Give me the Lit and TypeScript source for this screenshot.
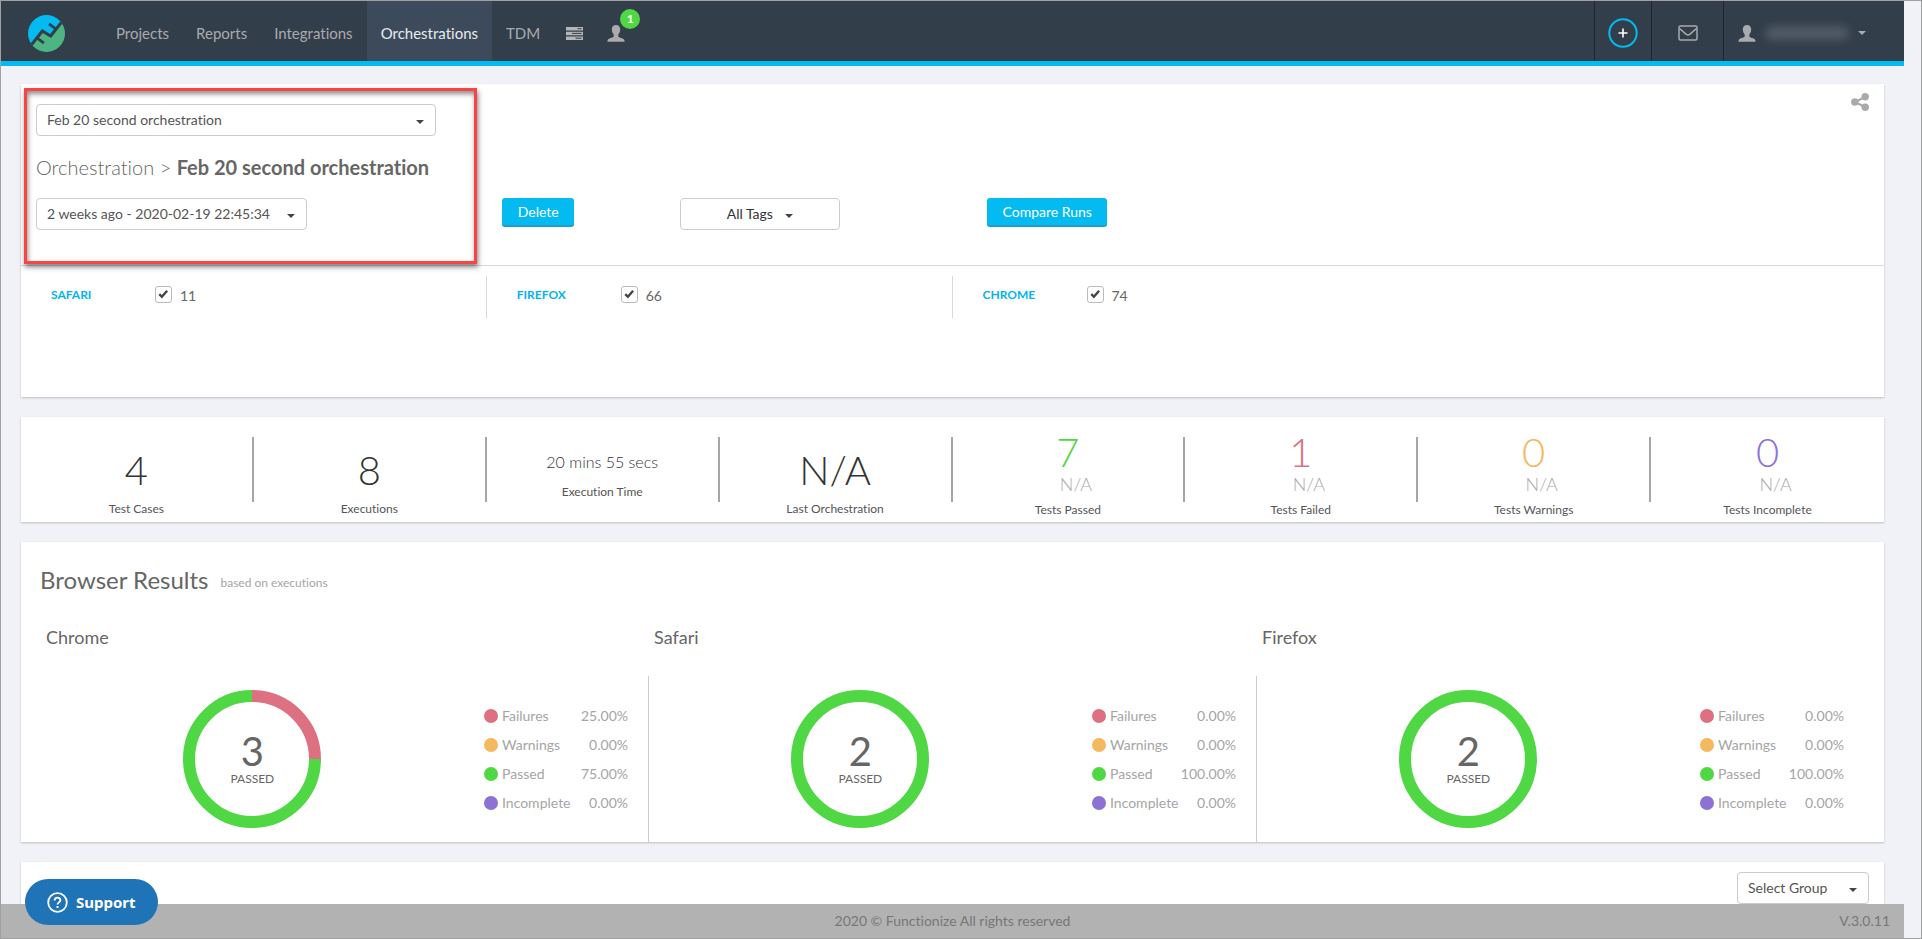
import { LitElement, html, svg, css } from "lit";
import { customElement, property, state } from "lit/decorators.js";
import { classMap } from "lit/directives/class-map.js";

interface Share {
  kind: "failures" | "warnings" | "passed" | "incomplete";
  label: string;
  value: number;
}

interface BrowserRun {
  name: string;
  passed: number;
  shares: Share[];
}

const COLORS: Record<Share["kind"], string> = {
  failures: "#dd7182",
  warnings: "#f4b85f",
  passed: "#4fd844",
  incomplete: "#8d72d6",
};

const shares = (f: number, w: number, p: number, i: number): Share[] => [
  { kind: "failures", label: "Failures", value: f },
  { kind: "warnings", label: "Warnings", value: w },
  { kind: "passed", label: "Passed", value: p },
  { kind: "incomplete", label: "Incomplete", value: i },
];

const RUNS: BrowserRun[] = [
  { name: "Chrome", passed: 3, shares: shares(25, 0, 75, 0) },
  { name: "Safari", passed: 2, shares: shares(0, 0, 100, 0) },
  { name: "Firefox", passed: 2, shares: shares(0, 0, 100, 0) },
];

const userIcon = html`<svg class="user" width="18" height="17" viewBox="0 0 18 17" aria-hidden="true">
  <path
    fill="currentColor"
    d="M9 0C6.2 0 4.800 1.900 4.800 4.600c0 2.100.9 3.900 1.900 4.900v1.700c-.3 1-1.500 1.300-3 1.900C1.700 13.900.4 14.700.4 16.800h17.200c0-2.100-1.300-2.900-3.300-3.700-1.500-.6-2.700-.9-3-1.900V9.500c1-1 1.900-2.800 1.900-4.900C13.200 1.900 11.800 0 9 0z"
  />
</svg>`;

@customElement("browser-result")
export class BrowserResult extends LitElement {
  @property({ attribute: false }) run!: BrowserRun;

  static styles = css`
    :host {
      display: flex;
      flex-direction: column;
      min-width: 0;
    }
    .name {
      margin: 0;
      padding: 0 6px;
      font-size: 18px;
      line-height: 24px;
      font-weight: 400;
      color: #666;
    }
    .body {
      flex: 1;
      display: grid;
      grid-template-columns: 72% auto;
      justify-content: space-between;
      align-items: center;
      margin-top: 27px;
      padding-right: 20px;
      border-left: 1px solid transparent;
    }
    :host(.divided) .body {
      border-left-color: #ccc;
    }
    .chart {
      display: grid;
      place-items: center;
    }
    .chart > * {
      grid-area: 1 / 1;
    }
    .center {
      display: flex;
      flex-direction: column;
      align-items: center;
      color: #666;
    }
    .count {
      font-size: 40px;
      line-height: 42px;
    }
    .caption {
      font-size: 12px;
      line-height: 14px;
      padding-bottom: 2px;
    }
    .legend {
      width: 144px;
      margin: 0;
      padding: 0;
      list-style: none;
      font-size: 14px;
      line-height: 29px;
      color: #a5a5a5;
    }
    .item {
      display: flex;
      align-items: center;
      gap: 4px;
    }
    .dot {
      width: 14px;
      height: 14px;
      border-radius: 50%;
    }
    .failures {
      background: #dd7182;
    }
    .warnings {
      background: #f4b85f;
    }
    .passed {
      background: #4fd844;
    }
    .incomplete {
      background: #8d72d6;
    }
    .value {
      margin-left: auto;
    }
  `;

  private arcs() {
    let start = 0;
    return this.run.shares
      .filter((s) => s.value > 0)
      .map((s) => {
        const arc = svg`<circle cx="70" cy="70" r="63" fill="none" stroke=${COLORS[s.kind]} stroke-width="12"
          pathLength="100" stroke-dasharray="${s.value} ${100 - s.value}" stroke-dashoffset=${-start}
          transform="rotate(-90 70 70)"></circle>`;
        start += s.value;
        return arc;
      });
  }

  render() {
    return html`
      <h3 class="name">${this.run.name}</h3>
      <div class="body">
        <div class="chart">
          <svg width="140" height="140" viewBox="0 0 140 140" aria-hidden="true">${this.arcs()}</svg>
          <div class="center">
            <span class="count">${this.run.passed}</span>
            <span class="caption">PASSED</span>
          </div>
        </div>
        <ul class="legend">
          ${this.run.shares.map(
            (s) => html`<li class="item">
              <span class="dot ${s.kind}"></span>
              <span>${s.label}</span>
              <span class="value">${s.value.toFixed(2)}%</span>
            </li>`
          )}
        </ul>
      </div>
    `;
  }
}

@customElement("app-root")
export class AppRoot extends LitElement {
  @state() private active = "Orchestrations";

  private links = ["Projects", "Reports", "Integrations", "Orchestrations", "TDM"];

  private browsers = [
    { name: "SAFARI", count: 11 },
    { name: "FIREFOX", count: 66 },
    { name: "CHROME", count: 74 },
  ];

  private totals = [
    { value: "4", label: "Test Cases" },
    { value: "8", label: "Executions" },
    { value: "20 mins 55 secs", label: "Execution Time", small: true },
    { value: "N/A", label: "Last Orchestration" },
  ];

  private outcomes = [
    { value: 7, label: "Tests Passed", tone: "green" },
    { value: 1, label: "Tests Failed", tone: "red" },
    { value: 0, label: "Tests Warnings", tone: "orange" },
    { value: 0, label: "Tests Incomplete", tone: "purple" },
  ];

  static styles = css`
    :host {
      display: block;
      font-family: Lato, "Liberation Sans", sans-serif;
      font-size: 14px;
      font-variant-ligatures: none;
      line-height: 20px;
      color: #666;
    }
    * {
      box-sizing: border-box;
    }
    button,
    select {
      font: inherit;
      font-variant-ligatures: none;
      color: inherit;
      cursor: pointer;
    }
    svg {
      display: block;
    }
    .shell {
      position: relative;
      display: flex;
      flex-direction: column;
      height: 100vh;
      padding-right: 17px;
      background: #f1f2f7;
      border: 1px solid #a0a0a0;
    }

    /* top bar */
    .topbar {
      display: flex;
      flex: none;
      height: 65px;
      background: #323e4a;
      border-bottom: 5px solid #03bbf1;
      color: #a9abad;
    }
    .brand {
      display: flex;
      align-items: center;
      padding: 4px 38px 0 27px;
    }
    .nav {
      display: flex;
      gap: 1px;
      font-size: 15px;
    }
    .link {
      display: flex;
      align-items: center;
      padding: 4px 13px 0;
      color: inherit;
      text-decoration: none;
    }
    .link.active {
      padding: 4px 14px 0;
      background: #3d4a5b;
      color: #e8ebee;
    }
    .link.icon {
      position: relative;
      padding: 4px 11px 0 12px;
    }
    .badge {
      position: absolute;
      top: 8px;
      left: 25px;
      width: 20px;
      height: 20px;
      border-radius: 50%;
      background: #4fd844;
      color: #fff;
      font-size: 12px;
      font-weight: 700;
      line-height: 20px;
      text-align: center;
    }
    .tools {
      display: flex;
      margin-left: auto;
    }
    .tool {
      display: flex;
      align-items: center;
      justify-content: center;
      padding: 4px 0 0;
      background: none;
      border: 0;
      border-left: 1px solid #1d2630;
    }
    .add {
      width: 57px;
    }
    .mail {
      width: 72px;
    }
    .account {
      width: 181px;
      justify-content: flex-start;
      padding-left: 14px;
      gap: 9px;
    }
    .who {
      width: 84px;
      height: 14px;
      border-radius: 7px;
      background: #515a65;
      filter: blur(4px);
    }
    .caret {
      border: 4px solid transparent;
      border-top-color: currentColor;
      border-bottom: 0;
    }

    /* cards */
    .page {
      flex: 1;
      min-height: 0;
      overflow: hidden;
      display: flex;
      flex-direction: column;
      gap: 20px;
      padding: 18px 20px 0;
    }
    .card {
      position: relative;
      flex: none;
      background: #fff;
      box-shadow: 0 1px 2px rgba(0, 0, 0, 0.22);
    }
    .head {
      display: grid;
      grid-template-columns: 1fr 1fr 2fr;
      align-items: end;
      padding: 20px 0 35px;
      border-bottom: 1px solid #d9d9d9;
    }
    .choose {
      display: flex;
      flex-direction: column;
      align-items: flex-start;
      gap: 20px;
      padding-left: 15px;
    }
    .title {
      margin: 0;
      font-size: 20px;
      line-height: 22px;
      font-weight: 300;
    }
    .title b {
      font-weight: 700;
    }
    .actions {
      display: flex;
      align-items: flex-start;
      height: 32px;
      padding-left: 15px;
      gap: 106px;
    }
    .compare {
      padding-left: 34px;
    }
    .pick {
      position: relative;
      display: block;
      width: 160px;
    }
    .pick::after {
      content: "";
      position: absolute;
      top: 16px;
      right: 12px;
      border: 4px solid transparent;
      border-top-color: #444;
      border-bottom: 0;
      pointer-events: none;
    }
    .pick select {
      display: block;
      appearance: none;
      width: 100%;
      height: 32px;
      padding: 0 24px 0 10px;
      border: 1px solid #ccc;
      border-radius: 4px;
      background: #fff;
      color: #555;
    }
    .pick.names {
      width: 400px;
    }
    .pick.runs {
      width: 271px;
    }
    .pick.tags::after {
      right: 47px;
    }
    .pick.tags select {
      padding-left: 46px;
      color: #333;
    }
    .pick.groups {
      width: 132px;
    }
    .primary {
      height: 29px;
      padding: 0 15px 0 16px;
      border: 0;
      border-bottom: 2px solid #1c9fc8;
      border-radius: 3px;
      background: #03bbf1;
      color: #fff;
    }
    .share {
      position: absolute;
      top: 9px;
      right: 15px;
      padding: 0;
      border: 0;
      background: none;
      color: #aaa;
    }
    .mark {
      position: absolute;
      top: 4px;
      left: 3px;
      width: 453px;
      height: 176px;
      border: 3px solid #fa4343;
      box-shadow: 1px 3px 5px rgba(0, 0, 0, 0.5), inset 1px 3px 5px rgba(0, 0, 0, 0.45);
      pointer-events: none;
    }
    .filters {
      display: grid;
      grid-template-columns: repeat(4, 1fr);
      padding: 10px 0 79px;
    }
    .filter {
      display: flex;
      align-items: flex-start;
      height: 42px;
      padding: 10px 0 0 30px;
      border-right: 1px solid #d9d9d9;
      line-height: 20px;
    }
    .filter:nth-of-type(3) {
      border-right: 0;
    }
    .filter-name {
      width: 104px;
      color: #03b4ee;
      font-size: 12px;
      font-weight: 700;
      line-height: 18px;
    }
    .check {
      appearance: none;
      width: 17px;
      height: 17px;
      margin: 0 8px 0 0;
      border: 1px solid #bbb;
      border-radius: 3px;
      background: #fff;
    }
    .check:checked {
      background: #fff
        url("data:image/svg+xml,%3Csvg xmlns='http://www.w3.org/2000/svg' viewBox='0 0 15 15'%3E%3Cpath d='M3.300 7.200l2.600 2.600 5.200-6' fill='none' stroke='%23444' stroke-width='2.400'/%3E%3C/svg%3E")
        center / 15px 15px;
    }

    /* totals */
    .stats {
      display: grid;
      grid-template-columns: repeat(8, 1fr);
      height: 105px;
      padding: 20px 0;
    }
    .stat {
      display: flex;
      flex-direction: column;
      align-items: center;
      height: 65px;
      border-right: 2px solid #a6a6a6;
      color: #333;
    }
    .stat:last-child {
      border-right: 0;
    }
    .big {
      padding-top: 9px;
      font-size: 40px;
      line-height: 48px;
      font-weight: 300;
    }
    .small .big {
      padding-top: 16px;
      font-size: 16px;
      line-height: 18px;
    }
    .label {
      padding-top: 7px;
      font-size: 12px;
      line-height: 16px;
      color: #555;
    }
    .small .label {
      padding-top: 13px;
    }
    .outcome .big {
      padding: 0;
      line-height: 30px;
    }
    .outcome .label {
      padding-top: 7px;
    }
    .trend {
      padding: 6px 0 0 16px;
      font-size: 18px;
      line-height: 22px;
      font-weight: 300;
      color: #aaa;
    }
    .green {
      color: #4fd844;
    }
    .red {
      color: #dd7182;
    }
    .orange {
      color: #f4b85f;
    }
    .purple {
      color: #8d72d6;
    }

    /* browser results */
    .results {
      height: 300px;
      padding: 23px 20px 0 19px;
      display: flex;
      flex-direction: column;
      gap: 26px;
    }
    .results-title {
      display: flex;
      align-items: center;
      gap: 12px;
      margin: 0;
      font-size: 24px;
      line-height: 30px;
      font-weight: 400;
    }
    .results-title small {
      padding-top: 5px;
      font-size: 12px;
      line-height: 16px;
      color: #a5a5a5;
    }
    .browsers {
      flex: 1;
      display: grid;
      grid-template-columns: repeat(3, 1fr);
      padding-top: 4px;
    }
    .groups-bar {
      display: flex;
      justify-content: flex-end;
      padding: 10px 15px;
    }

    /* footer */
    .footer {
      flex: none;
      display: grid;
      grid-template-columns: 1fr auto 1fr;
      align-items: center;
      height: 34px;
      padding: 0 14px;
      background: #b2b2b2;
      color: #777;
    }
    .version {
      grid-column: 3;
      justify-self: end;
    }
    .copy {
      grid-column: 2;
    }
    .support {
      position: absolute;
      left: 24px;
      bottom: 13px;
      display: flex;
      align-items: center;
      gap: 8px;
      height: 46px;
      padding: 0 22px;
      border: 0;
      border-radius: 23px;
      background: #1f73b7;
      color: #fff;
      font-family: "Noto Sans", "Open Sans", sans-serif;
      font-size: 15px;
      font-weight: 700;
    }
  `;

  private select(kind: string, label: string, text: string) {
    return html`<label class="pick ${kind}">
      <select aria-label=${label}>
        <option>${text}</option>
      </select>
    </label>`;
  }

  private renderTopbar() {
    return html`<header class="topbar">
      <a class="brand" href="#" aria-label="Home">
        <svg width="37" height="37" viewBox="0 0 36 36">
          <clipPath id="disc"><circle cx="18" cy="18" r="18" /></clipPath>
          <g clip-path="url(#disc)">
            <path fill="#03bbf1" d="M0 0H36V4L23 21.500 13 14.500 2 30H0z" />
            <path fill="#4cb582" d="M36 36H0V32L13 14.500 23 21.500 34 6H36z" />
            <path fill="none" stroke="#323e4a" stroke-width="3" d="M1 32 14 15.500 22 20.500 35 4" />
            <path fill="none" stroke="#323e4a" stroke-width="2.600" d="M9 22.500l6.500 4.800M27 13.500l-6.500-4.800" />
          </g>
        </svg>
      </a>
      <nav class="nav">
        ${this.links.map(
          (name) => html`<a
            class=${classMap({ link: true, active: name === this.active })}
            href="#"
            @click=${() => (this.active = name)}
            >${name}</a
          >`
        )}
        <a class="link icon" href="#" aria-label="Queue">
          <svg width="17" height="13" viewBox="0 0 17 13">
            <path fill="#b4b6b8" d="M0 0h17v3.500H0zM0 4.700h17v3.500H0zM0 9.400h17V13H0z" />
            <path stroke="#323e4a" d="M11.500 1.700h4M6 6.400h9.500M9.500 11.200h6" />
          </svg>
        </a>
        <a class="link icon" href="#" aria-label="Users">${userIcon}<span class="badge">1</span></a>
      </nav>
      <div class="tools">
        <button class="tool add" aria-label="Add">
          <svg width="30" height="30" viewBox="0 0 30 30">
            <circle cx="15" cy="15" r="13.700" fill="none" stroke="#03bbf1" stroke-width="2" />
            <path d="M15 10.500v9M10.500 15h9" stroke="#fff" stroke-width="1.600" />
          </svg>
        </button>
        <button class="tool mail" aria-label="Messages">
          <svg width="20" height="16" viewBox="0 0 20 16" fill="none" stroke="#a9abad" stroke-width="1.500">
            <rect x="1" y="1" width="18" height="14" rx="1.500" />
            <path d="M1.500 3.500 8.300 9.300q1.700 1.300 3.400 0L18.500 3.500" />
          </svg>
        </button>
        <button class="tool account" aria-label="Account">
          ${userIcon}<span class="who"></span><span class="caret"></span>
        </button>
      </div>
    </header>`;
  }

  private renderOrchestration() {
    return html`<section class="card">
      <div class="head">
        <div class="choose">
          ${this.select("names", "Orchestration", "Feb 20 second orchestration")}
          <h1 class="title">Orchestration &gt; <b>Feb 20 second orchestration</b></h1>
          ${this.select("runs", "Run", "2 weeks ago - 2020-02-19 22:45:34")}
        </div>
        <div class="actions">
          <button class="primary">Delete</button>
          ${this.select("tags", "Tags", "All Tags")}
        </div>
        <div class="actions compare"><button class="primary">Compare Runs</button></div>
      </div>
      <div class="filters">
        ${this.browsers.map(
          (b) => html`<label class="filter">
            <span class="filter-name">${b.name}</span>
            <input class="check" type="checkbox" checked />
            <span>${b.count}</span>
          </label>`
        )}
      </div>
      <button class="share" aria-label="Share">
        <svg width="18" height="18" viewBox="0 0 18 18" fill="currentColor">
          <path d="M4 9 14 4M4 9l10 5" stroke="currentColor" stroke-width="2.200" />
          <circle cx="3.800" cy="9" r="3.700" />
          <circle cx="14.200" cy="3.800" r="3.700" />
          <circle cx="14.200" cy="14.200" r="3.700" />
        </svg>
      </button>
      <div class="mark"></div>
    </section>`;
  }

  private renderStats() {
    return html`<section class="card stats">
      ${this.totals.map(
        (t) => html`<div class=${classMap({ stat: true, small: !!t.small })}>
          <span class="big">${t.value}</span>
          <span class="label">${t.label}</span>
        </div>`
      )}
      ${this.outcomes.map(
        (o) => html`<div class="stat outcome">
          <span class="big ${o.tone}">${o.value}</span>
          <span class="trend">N/A</span>
          <span class="label">${o.label}</span>
        </div>`
      )}
    </section>`;
  }

  render() {
    return html`<div class="shell">
      ${this.renderTopbar()}
      <main class="page">
        ${this.renderOrchestration()} ${this.renderStats()}
        <section class="card results">
          <h2 class="results-title">Browser Results <small>based on executions</small></h2>
          <div class="browsers">
            ${RUNS.map(
              (run, i) => html`<browser-result class=${classMap({ divided: i > 0 })} .run=${run}></browser-result>`
            )}
          </div>
        </section>
        <section class="card groups-bar">${this.select("groups", "Group", "Select Group")}</section>
      </main>
      <footer class="footer">
        <span class="copy">2020 © Functionize All rights reserved</span>
        <span class="version">V.3.0.11</span>
      </footer>
      <button class="support">
        <svg width="21" height="21" viewBox="0 0 21 21" fill="none" stroke="#fff" stroke-width="1.800">
          <circle cx="10.500" cy="10.500" r="9.300" />
          <path d="M7.600 8.600c0-1.800 1.300-2.900 2.900-2.900s2.900 1 2.900 2.600c0 2-2.900 2.200-2.900 4.200" />
          <path d="M10.500 14v2" stroke-width="2" />
        </svg>
        Support
      </button>
    </div>`;
  }
}
